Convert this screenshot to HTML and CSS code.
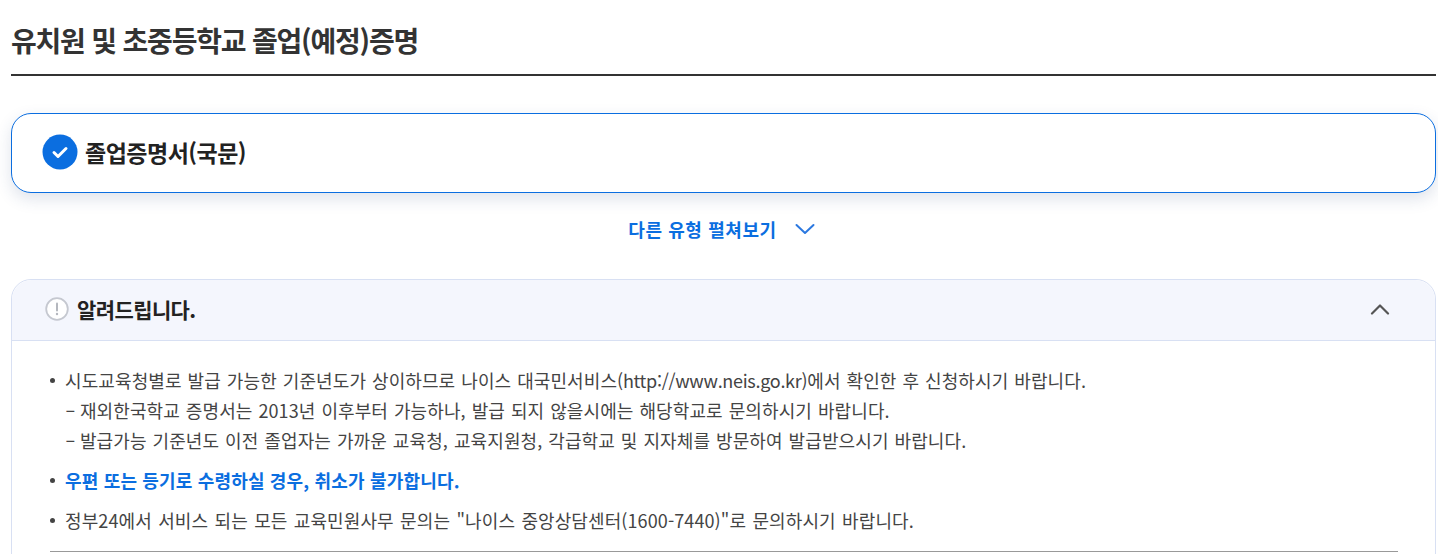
FILE: index.html
```html
<!DOCTYPE html>
<html lang="ko">
<head>
  <meta charset="UTF-8">
  <title>유치원 및 초중등학교 졸업(예정)증명</title>
  <link rel="stylesheet" href="styles.css">
</head>
<body>
  <div class="wrap">
    <h1 class="page-title">유치원 및 초중등학교 졸업(예정)증명</h1>

    <div class="type-card">
      <svg class="check" width="36" height="36" viewBox="0 0 36 36">
        <circle cx="18" cy="18" r="17.5" fill="#0b6ee0"/>
        <path d="M12 18.5l4 4 8-8" fill="none" stroke="#fff" stroke-width="3" stroke-linecap="round" stroke-linejoin="round"/>
      </svg>
      <span class="type-name">졸업증명서(국문)</span>
    </div>

    <div class="more-row">
      <span class="more-text">다른 유형 펼쳐보기</span>
      <svg class="more-arrow" width="20" height="12" viewBox="0 0 20 12">
        <path d="M1.5 2l8.5 8 8.5-8" fill="none" stroke="#2b78e0" stroke-width="2" stroke-linecap="round" stroke-linejoin="round"/>
      </svg>
    </div>

    <div class="notice">
      <div class="notice-head">
        <svg class="notice-icon" width="24" height="24" viewBox="0 0 24 24">
          <circle cx="12" cy="12" r="10.8" fill="#fff" stroke="#c5c8d0" stroke-width="1.8"/>
          <path d="M12 6.5v7" stroke="#b4b7be" stroke-width="2" stroke-linecap="round"/>
          <circle cx="12" cy="17" r="1.2" fill="#b4b7be"/>
        </svg>
        <span class="notice-title">알려드립니다.</span>
        <svg class="notice-toggle" width="20" height="12" viewBox="0 0 20 12">
          <path d="M2 10.5l8-8 8 8" fill="none" stroke="#555" stroke-width="2.2" stroke-linecap="round" stroke-linejoin="round"/>
        </svg>
      </div>
      <div class="notice-body">
        <ul class="notice-list">
          <li>
            시도교육청별로 발급 가능한 기준년도가 상이하므로 나이스 대국민서비스<span class="url">(http://www.neis.go.kr)</span>에서 확인한 후 신청하시기 바랍니다.
            <div class="sub-line"><span class="dash">-</span> 재외한국학교 증명서는 2013년 이후부터 가능하나, 발급 되지 않을시에는 해당학교로 문의하시기 바랍니다.</div>
            <div class="sub-line"><span class="dash">-</span> 발급가능 기준년도 이전 졸업자는 가까운 교육청, 교육지원청, 각급학교 및 지자체를 방문하여 발급받으시기 바랍니다.</div>
          </li>
          <li class="strong">우편 또는 등기로 수령하실 경우, 취소가 불가합니다.</li>
          <li class="last">정부24에서 서비스 되는 모든 교육민원사무 문의는 "나이스 중앙상담센터(1600-7440)"로 문의하시기 바랍니다.</li>
        </ul>
        <hr class="divider">
      </div>
    </div>
  </div>
</body>
</html>
```

FILE: styles.css
```css
html, body { margin: 0; height: 554px; overflow: hidden; background: #fff; }
body { font-family: "Noto Sans CJK KR", "Noto Sans", sans-serif; color: #333; }
.wrap { margin: 0 2px 0 11px; }
.page-title { margin: 0; height: 74px; line-height: 80px; font-size: 28px; font-weight: 700; letter-spacing: -1.2px; color: #333; border-bottom: 2px solid #333; }
.type-card { display: flex; align-items: center; gap: 7px; height: 76px; margin-top: 37px; padding: 0 0 2px 30px; border: 1px solid #0b6ee0; border-radius: 20px; background: #fff; box-shadow: 0 6px 16px rgba(40, 70, 120, 0.15); }
.type-name { font-size: 23px; font-weight: 700; letter-spacing: -0.5px; color: #222; }
.more-row { display: flex; justify-content: center; align-items: center; gap: 18px; height: 72px; padding-right: 4px; }
.more-text { font-size: 18px; font-weight: 700; letter-spacing: 0.6px; color: #0b6ee0; }
.notice { margin-top: 14px; height: 320px; border: 1px solid #d8e0f3; border-radius: 20px; }
.notice-head { display: flex; align-items: center; height: 58px; padding: 0 33px 2px; background: #f4f6fd; border-bottom: 1px solid #d8e0f3; border-radius: 20px 20px 0 0; }
.notice-icon { margin-right: 8px; }
.notice-title { font-size: 21px; font-weight: 700; letter-spacing: -0.6px; color: #222; }
.notice-toggle { margin-left: auto; margin-right: 12px; }
.notice-body { padding: 24px 37px 0 38px; }
.notice-list { list-style: none; margin: 0; padding: 0; font-size: 18px; line-height: 30px; letter-spacing: 0.1px; word-spacing: 0.8px; color: #444; }
.notice-list li { position: relative; padding-left: 15px; margin-bottom: 10px; }
.notice-list li::before { content: ""; position: absolute; left: 0; top: 13px; width: 5px; height: 5px; border-radius: 50%; background: #444; }
.notice-list .strong { font-weight: 700; color: #0b6ee0; letter-spacing: 0.17px; word-spacing: 0; }
.notice-list .last { margin-bottom: 16px; word-spacing: 1.2px; }
.url { letter-spacing: -0.3px; }
.dash { display: inline-block; width: 9px; transform: scaleX(1.7); transform-origin: left center; }
.divider { margin: 0; border: 0; border-top: 1px solid #999; }
```
